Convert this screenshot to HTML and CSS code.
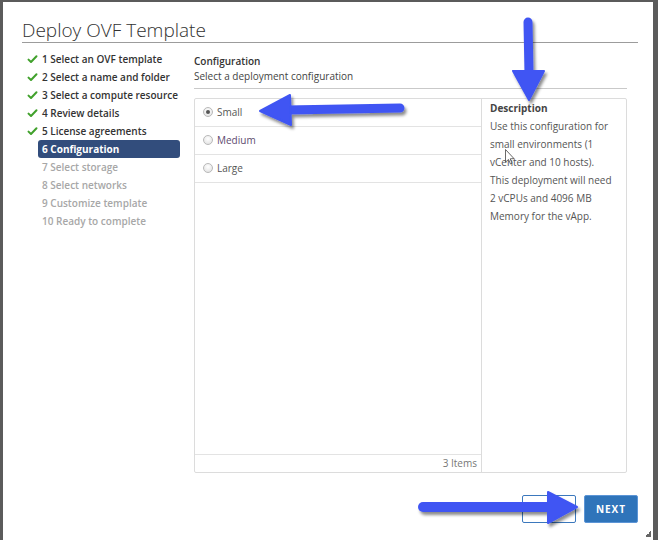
FILE: index.html
```html
<!DOCTYPE html>
<html lang="en">

<head>
    <meta charset="UTF-8">
    <meta name="viewport" content="width=device-width, initial-scale=1.0">
    <title>Deploy OVF Template</title>
    <link rel="stylesheet" href="styles.css">
</head>

<body>
    <div class="dialog">
        <h1 class="dialogTitulo">Deploy OVF Template</h1>
        <div class="wizard">
            <ul class="passos">
                <li class="feito"><span class="check"></span><span class="rotulo">1 Select an OVF template</span></li>
                <li class="feito"><span class="check"></span><span class="rotulo">2 Select a name and folder</span></li>
                <li class="feito"><span class="check"></span><span class="rotulo">3 Select a compute resource</span></li>
                <li class="feito"><span class="check"></span><span class="rotulo">4 Review details</span></li>
                <li class="feito"><span class="check"></span><span class="rotulo">5 License agreements</span></li>
                <li class="ativo"><span class="check"></span><span class="rotulo">6 Configuration</span></li>
                <li><span class="check"></span><span class="rotulo">7 Select storage</span></li>
                <li><span class="check"></span><span class="rotulo">8 Select networks</span></li>
                <li><span class="check"></span><span class="rotulo">9 Customize template</span></li>
                <li><span class="check"></span><span class="rotulo">10 Ready to complete</span></li>
            </ul>
            <div class="painel">
                <div class="cabecalho">
                    <h2>Configuration</h2>
                    <p>Select a deployment configuration</p>
                </div>
                <div class="tabela">
                    <div class="lista">
                        <label class="opcao"><span class="radio marcado"></span>Small</label>
                        <label class="opcao medio"><span class="radio"></span>Medium</label>
                        <label class="opcao"><span class="radio"></span>Large</label>
                        <div class="rodape">3 Items</div>
                    </div>
                    <div class="descricao">
                        <h3>Description</h3>
                        <p>Use this configuration for<br>small environments (1<br>vCenter and 10 hosts).<br>This deployment will need<br>2 vCPUs and 4096 MB<br>Memory for the vApp.</p>
                    </div>
                </div>
                <div class="botoes">
                    <button class="btnContorno" aria-label="Back"></button>
                    <button class="btnPrimario">NEXT</button>
                </div>
            </div>
        </div>
        <span class="alca"></span>
    </div>

    <!-- setas azuis por cima da tela -->
    <svg class="setas" width="658" height="540" viewBox="0 0 658 540">
        <defs>
            <filter id="sombra" x="-20%" y="-20%" width="140%" height="140%">
                <feDropShadow dx="2" dy="3" stdDeviation="1.6" flood-color="#000" flood-opacity="0.45" />
            </filter>
        </defs>
        <g fill="#3f55f3" stroke="#3f55f3" stroke-linecap="round" stroke-linejoin="round" filter="url(#sombra)">
            <line x1="400" y1="108" x2="286" y2="110" stroke-width="9" />
            <polygon points="290,95 291,125 260,111" stroke-width="2" />

            <line x1="528" y1="22" x2="529" y2="74" stroke-width="9" />
            <polygon points="513,71 544,71 529,100" stroke-width="2" />

            <line x1="423" y1="507" x2="552" y2="507" stroke-width="10" />
            <polygon points="548,492 548,523 577,507" stroke-width="2" />
        </g>
        <!-- ponteiro do mouse -->
        <path d="M505.5 149.5 L505.5 162 L508.5 159.5 L510.5 164 L512 163.3 L510.2 158.8 L514 158.6 Z" fill="#fff" stroke="#444" stroke-width="0.8" />
    </svg>
</body>

</html>
```

FILE: styles.css
```css
* {
    box-sizing: border-box;
}

body {
    margin: 0;
    height: 540px;
    overflow: hidden;
    background-color: #5b5b5b;
    font-family: "Open Sans", "Liberation Sans", sans-serif;
    color: #333;
}

.dialog {
    position: relative;
    margin: 2px 5px 0 3px;
    height: 538px;
    background-color: #fff;
    padding: 16px 15px 0 19px;
}

.dialogTitulo {
    margin: 0;
    font-size: 19px;
    font-weight: 300;
    line-height: 24px;
    color: #313131;
    border-bottom: 1px solid #9c9c9c;
}

.wizard {
    display: flex;
    padding-top: 7px;
}

.passos {
    list-style: none;
    margin: 0;
    padding: 0;
    width: 172px;
    flex-shrink: 0;
}

.passos li {
    display: flex;
    align-items: center;
    height: 18px;
    font-size: 10px;
    font-weight: 600;
    color: #a7a7a7;
}

.passos .check {
    width: 16px;
    height: 18px;
    flex-shrink: 0;
}

.passos .feito {
    color: #333;
}

.passos .feito .check {
    background: url("data:image/svg+xml,%3Csvg xmlns='http://www.w3.org/2000/svg' width='16' height='18'%3E%3Cpath d='M6.5 9.6 L9 12 L14.5 6.2' fill='none' stroke='%2341a12c' stroke-width='2' stroke-linecap='round' stroke-linejoin='round'/%3E%3C/svg%3E") no-repeat;
}

.passos .rotulo {
    width: 142px;
    height: 18px;
    line-height: 18px;
    padding: 0 4px;
    border-radius: 3px;
    white-space: nowrap;
}

.passos .ativo .rotulo {
    background-color: #324d7c;
    color: #fff;
    font-weight: 700;
}

.painel {
    width: 433px;
    padding-top: 4px;
}

.cabecalho {
    border-bottom: 1px solid #c9c9c9;
    padding-bottom: 4px;
    margin-bottom: 9px;
}

.cabecalho h2,
.cabecalho p {
    margin: 0;
    font-size: 10px;
    line-height: 15px;
}

.cabecalho h2 {
    font-weight: 600;
}

.cabecalho p {
    color: #444;
}

.tabela {
    display: flex;
    height: 375px;
    border: 1px solid #dcdcdc;
    border-radius: 2px;
}

.lista {
    width: 287px;
    display: flex;
    flex-direction: column;
    border-right: 1px solid #dcdcdc;
}

.opcao {
    display: flex;
    align-items: center;
    gap: 4px;
    height: 28px;
    padding: 0 0 1px 8px;
    border-bottom: 1px solid #e3e3e3;
    font-size: 10px;
    color: #555;
}

.opcao.medio {
    color: #5e4a6e;
}

.radio {
    width: 10px;
    height: 10px;
    border-radius: 50%;
    border: 1px solid #b9b9b9;
    background: radial-gradient(circle at 50% 35%, #fff, #dedede);
    display: flex;
    align-items: center;
    justify-content: center;
}

.radio.marcado::after {
    content: '';
    width: 4px;
    height: 4px;
    border-radius: 50%;
    background-color: #555;
}

.rodape {
    margin-top: auto;
    height: 18px;
    line-height: 17px;
    border-top: 1px solid #e3e3e3;
    text-align: right;
    padding-right: 4px;
    font-size: 10px;
    color: #777;
}

.descricao {
    flex: 1;
    padding: 0 8px;
}

.descricao h3 {
    margin: 0;
    font-size: 10px;
    font-weight: 700;
    line-height: 18px;
    color: #444;
}

.descricao p {
    margin: 0;
    font-size: 10px;
    line-height: 18px;
    color: #555;
}

.botoes {
    display: flex;
    justify-content: flex-end;
    gap: 8px;
    margin-top: 22px;
    margin-right: -11px;
}

.botoes button {
    height: 28px;
    width: 54px;
    border-radius: 2px;
    font-family: inherit;
    font-size: 10px;
    font-weight: 700;
    letter-spacing: 1px;
    cursor: pointer;
}

.btnContorno {
    background-color: #fff;
    border: 1px solid #3b78bd;
    color: #3b78bd;
}

.btnPrimario {
    width: 55px;
    background-color: #2f74ba;
    border: 1px solid #5c95d6;
    color: #fff;
}

.alca {
    position: absolute;
    right: 2px;
    bottom: 3px;
    width: 6px;
    height: 6px;
    background: linear-gradient(135deg, transparent 50%, #666 50%);
}

.setas {
    position: absolute;
    top: 0;
    left: 0;
    pointer-events: none;
}
```
